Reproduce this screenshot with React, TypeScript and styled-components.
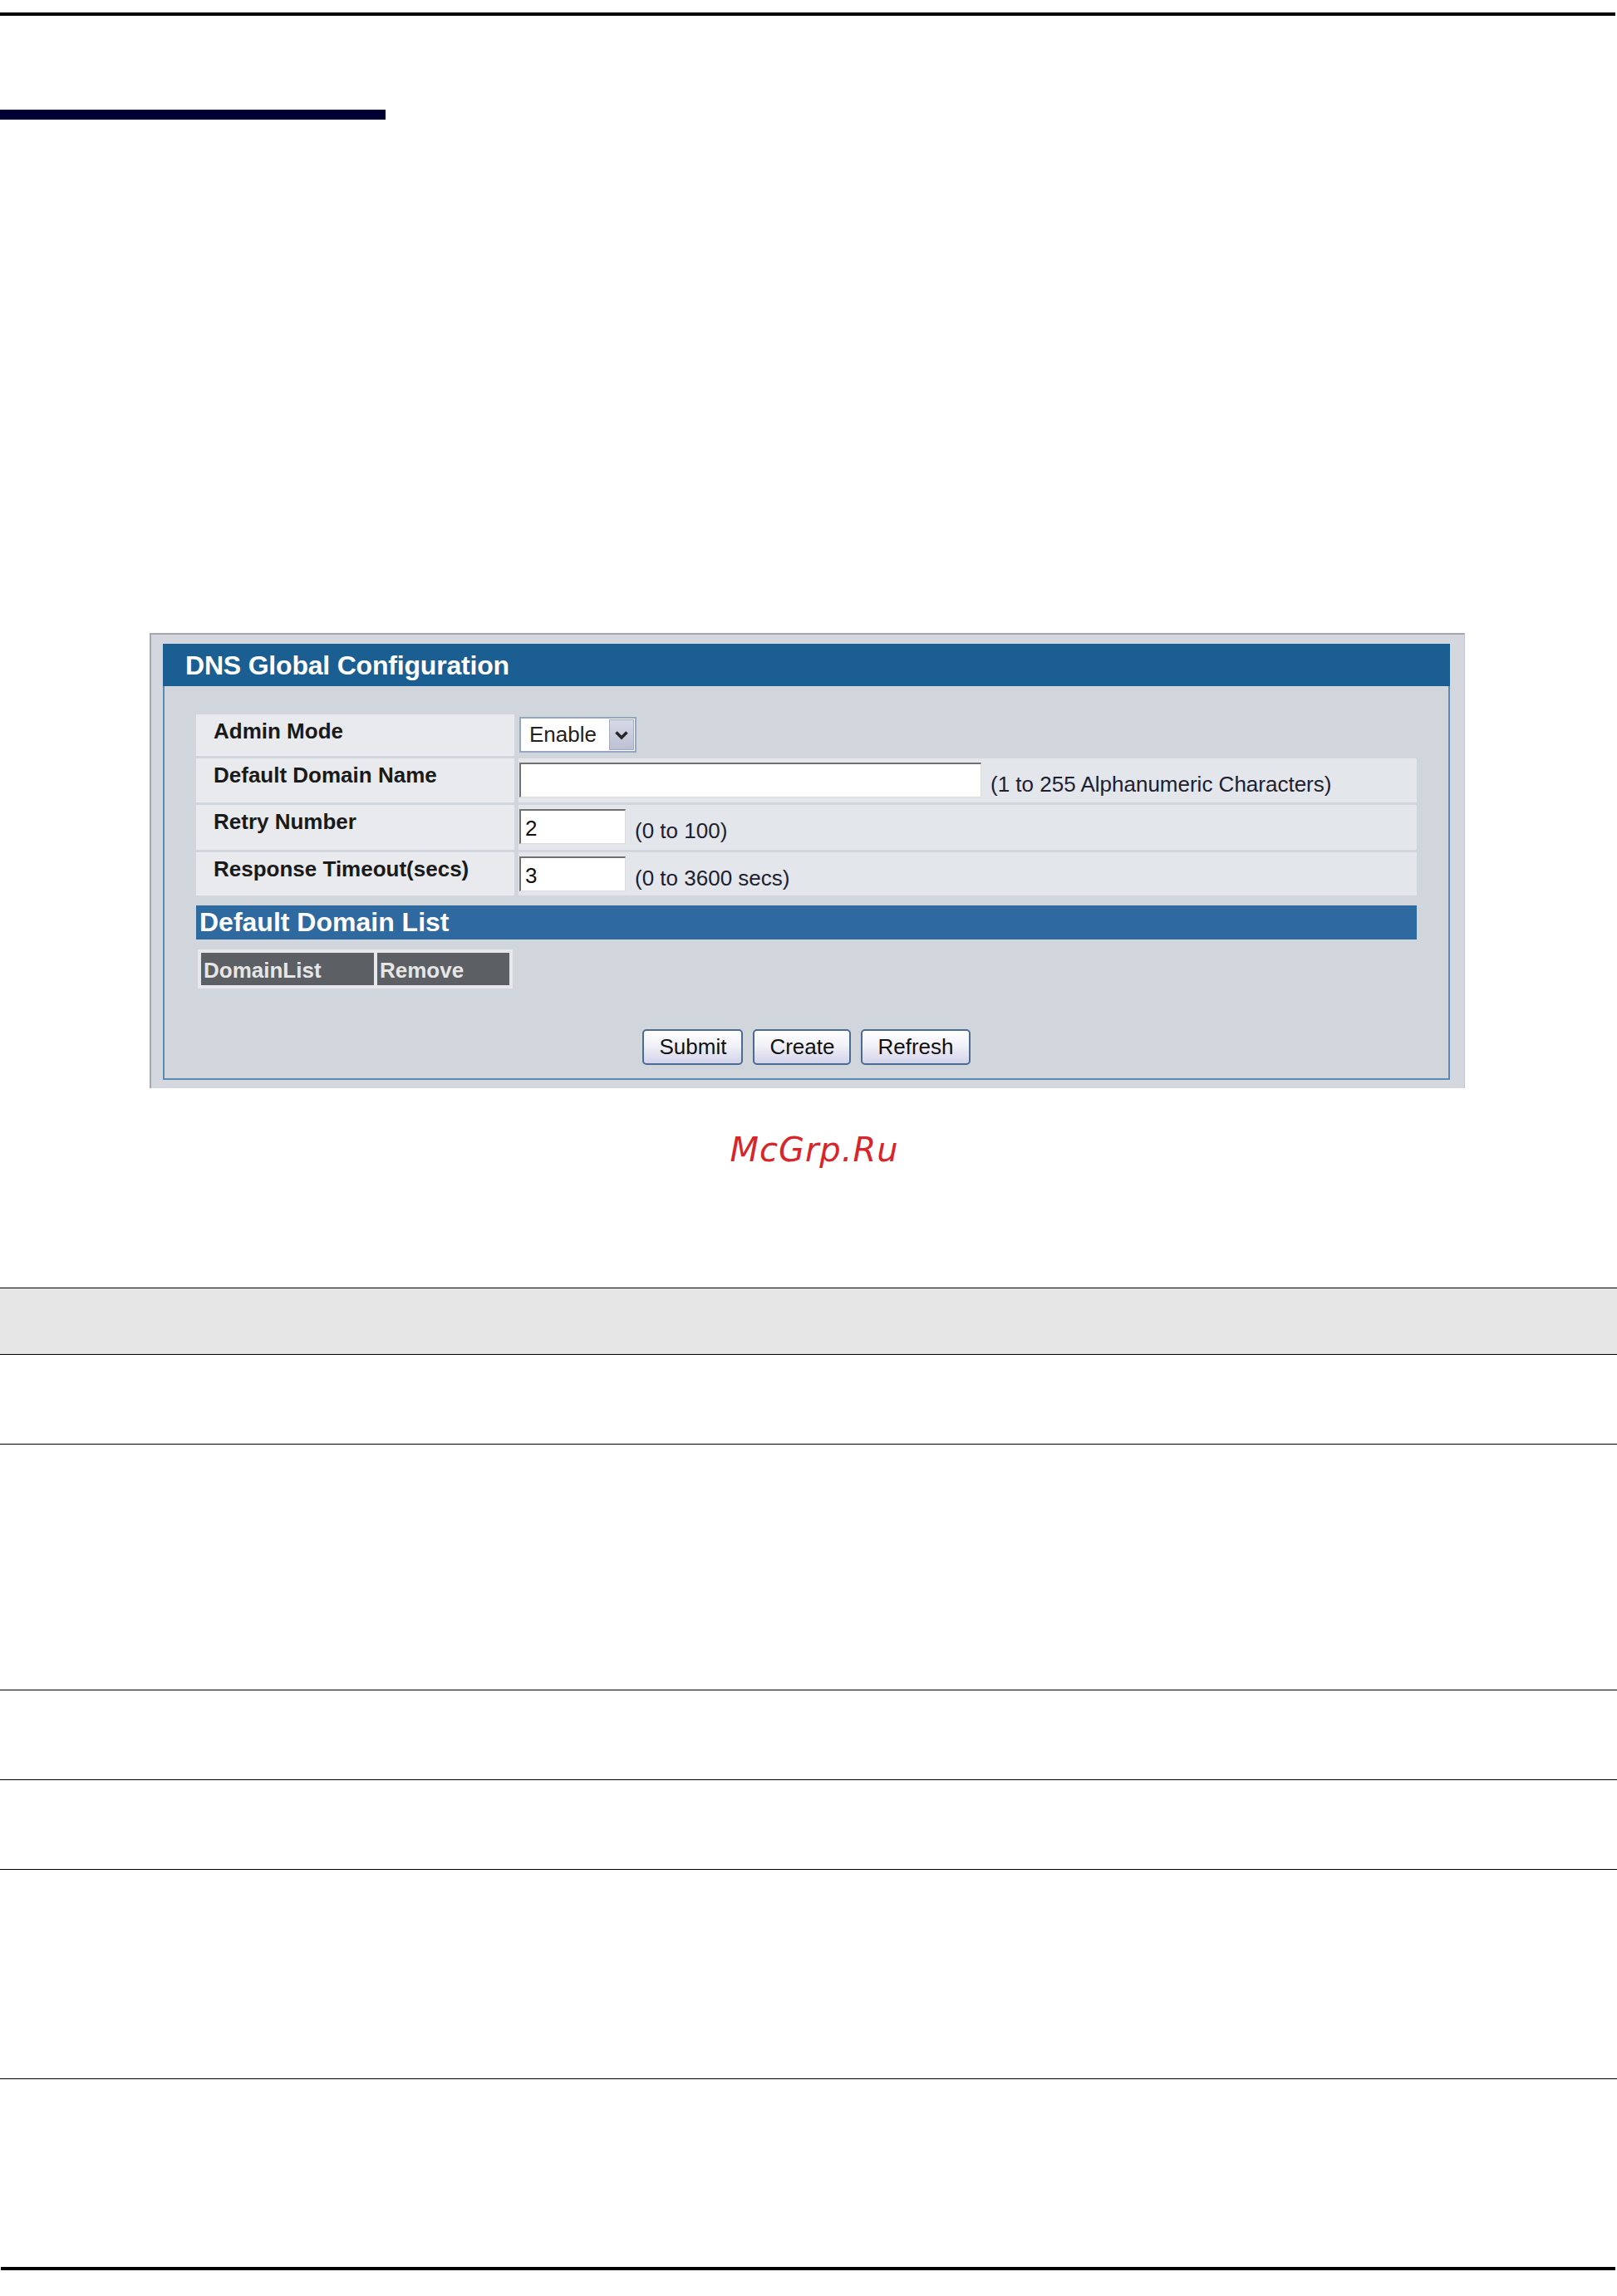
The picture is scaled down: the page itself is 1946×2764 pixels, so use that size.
import React from "react";
import styled, { createGlobalStyle } from "styled-components";

const GlobalStyle = createGlobalStyle`
  html, body { margin: 0; padding: 0; background: #fff; }
  body { font-family: "Liberation Sans", Arial, sans-serif; }
  * { box-sizing: border-box; }
`;

const Page = styled.div`
  width: 1946px;
  min-height: 2764px;
  display: flex;
  flex-direction: column;
  background: #fff;
`;

const TopRule = styled.div`
  margin-top: 15px;
  width: 1944px;
  height: 4px;
  background: #000;
`;

const ChapterBar = styled.div`
  margin-top: 113px;
  width: 464px;
  height: 12px;
  background: #000033;
`;

const Figure = styled.div`
  margin: 618px 0 0 180px;
  width: 1583px;
  padding: 11px 17px 10px 14px;
  background: #d4d8de;
  border-top: 2px solid #a3a8b0;
  border-left: 2px solid #a3a8b0;
  border-right: 1px solid #c4c8ce;
`;

const Frame = styled.div`
  border: 2px solid #5a8bb3;
  border-top: 0;
  background: #d1d6dd;
`;

const FrameTitle = styled.div`
  height: 51px;
  margin: 0 -2px;
  padding: 2px 0 0 27px;
  background: #1b5e92;
  color: #fff;
  font-weight: bold;
  font-size: 32px;
  line-height: 49px;
  letter-spacing: -0.2px;
  white-space: nowrap;
`;

const FrameBody = styled.div`
  padding: 34px 38px 16px;
`;

const FormGrid = styled.div`
  display: grid;
  grid-template-columns: 383px 1fr;
  grid-template-rows: 50px 53px 54px 52px;
  column-gap: 5px;
  row-gap: 3px;
`;

const Label = styled.div`
  background: #e9eaee;
  padding: 5px 0 0 21px;
  font-weight: bold;
  font-size: 26px;
  line-height: 30px;
  color: #1a1a1a;
  white-space: nowrap;
`;

const Value = styled.div<{ $plain?: boolean }>`
  background: ${(p) => (p.$plain ? "transparent" : "#e3e6ea")};
  padding: ${(p) => (p.$plain ? "3px" : "5px")} 0 0 1px;
  font-size: 26px;
  white-space: nowrap;
`;

const TextInput = styled.input<{ $w: number }>`
  width: ${(p) => p.$w}px;
  height: 42px;
  border-style: solid;
  border-width: 2px 1px 1px 2px;
  border-color: #707070 #dcdcdc #dcdcdc #707070;
  padding: 4px 5px 0;
  font-family: "Liberation Sans", Arial, sans-serif;
  font-size: 26px;
  color: #111;
  background: #fff;
  vertical-align: baseline;
  outline: none;
`;

const Hint = styled.span`
  margin-left: 11px;
  font-size: 26px;
  color: #202030;
  vertical-align: -3px;
`;

const SelectBox = styled.div`
  display: inline-flex;
  align-items: center;
  width: 141px;
  height: 43px;
  border: 2px solid #94a6c2;
  background: #fff;
  padding: 1px;
`;

const SelectText = styled.span`
  padding-left: 9px;
  font-size: 26px;
  color: #222;
  flex: 1;
`;

const SelectArrow = styled.span`
  width: 30px;
  height: 37px;
  display: flex;
  align-items: center;
  justify-content: center;
  border: 1px solid #a3abc2;
  background: linear-gradient(to bottom, #d6d9e6 0%, #bcc0d2 100%);
`;

const SectionBar = styled.div`
  margin-top: 12px;
  height: 41px;
  padding-left: 4px;
  background: #2e69a0;
  color: #fff;
  font-weight: bold;
  font-size: 32px;
  line-height: 41px;
  white-space: nowrap;
`;

const DomainTable = styled.div`
  margin: 12px 0 0 2px;
  display: flex;
  gap: 4px;
  padding: 4px;
  width: fit-content;
  background: #e6e8ec;
`;

const HeadCell = styled.div<{ $w: number }>`
  width: ${(p) => p.$w}px;
  height: 39px;
  padding: 3px 0 0 3px;
  background: #5c5f63;
  color: #e6e6e6;
  font-weight: bold;
  font-size: 26px;
  line-height: 36px;
  white-space: nowrap;
`;

const ButtonRow = styled.div`
  margin-top: 49px;
  display: flex;
  justify-content: center;
  gap: 12px;
`;

const Button = styled.button`
  height: 43px;
  padding: 0 18px;
  border: 2px solid #4b6b92;
  border-radius: 5px;
  background: linear-gradient(to bottom, #ffffff 0%, #f1f1f8 45%, #d3d3ea 100%);
  font-family: "Liberation Sans", Arial, sans-serif;
  font-size: 26px;
  color: #111;
`;

const Watermark = styled.div`
  margin-top: 50px;
  padding-left: 14px;
  text-align: center;
  font-family: "DejaVu Sans", sans-serif;
  font-style: italic;
  font-size: 40px;
  line-height: 48px;
  color: #d6262b;
  letter-spacing: 1px;
`;

const SpecTable = styled.div`
  margin-top: 142px;
  width: 1946px;
  border-top: 1px solid #000;
  display: flex;
  flex-direction: column;
`;

const SpecRow = styled.div<{ $h: number; $head?: boolean; $last?: boolean }>`
  height: ${(p) => p.$h}px;
  background: ${(p) => (p.$head ? "#e6e6e6" : "#fff")};
  border-bottom: ${(p) => (p.$last ? "0" : "1px solid #000")};
`;

const FooterRule = styled.div`
  margin-left: 1px;
  width: 1943px;
  height: 4px;
  background: #000;
`;

const Chevron = () => (
  <svg width="18" height="12" viewBox="0 0 18 12">
    <path d="M2.5 2.5 L9 9 L15.5 2.5" fill="none" stroke="#262626" strokeWidth="3.5" />
  </svg>
);

const rows = [80, 108, 296, 108, 108, 252];

export default function App() {
  return (
    <>
      <GlobalStyle />
      <Page>
        <TopRule />
        <ChapterBar />
        <Figure>
          <Frame>
            <FrameTitle>DNS Global Configuration</FrameTitle>
            <FrameBody>
              <FormGrid>
                <Label>Admin Mode</Label>
                <Value $plain>
                  <SelectBox>
                    <SelectText>Enable</SelectText>
                    <SelectArrow>
                      <Chevron />
                    </SelectArrow>
                  </SelectBox>
                </Value>
                <Label>Default Domain Name</Label>
                <Value>
                  <TextInput $w={556} readOnly defaultValue="" />
                  <Hint>(1 to 255 Alphanumeric Characters)</Hint>
                </Value>
                <Label>Retry Number</Label>
                <Value>
                  <TextInput $w={128} readOnly defaultValue="2" />
                  <Hint>(0 to 100)</Hint>
                </Value>
                <Label>Response Timeout(secs)</Label>
                <Value>
                  <TextInput $w={128} readOnly defaultValue="3" />
                  <Hint>(0 to 3600 secs)</Hint>
                </Value>
              </FormGrid>
              <SectionBar>Default Domain List</SectionBar>
              <DomainTable>
                <HeadCell $w={208}>DomainList</HeadCell>
                <HeadCell $w={159}>Remove</HeadCell>
              </DomainTable>
              <ButtonRow>
                <Button>Submit</Button>
                <Button>Create</Button>
                <Button>Refresh</Button>
              </ButtonRow>
            </FrameBody>
          </Frame>
        </Figure>
        <Watermark>McGrp.Ru</Watermark>
        <SpecTable>
          {rows.map((h, i) => (
            <SpecRow key={i} $h={h} $head={i === 0} />
          ))}
          <SpecRow $h={226} $last />
        </SpecTable>
        <FooterRule />
      </Page>
    </>
  );
}
